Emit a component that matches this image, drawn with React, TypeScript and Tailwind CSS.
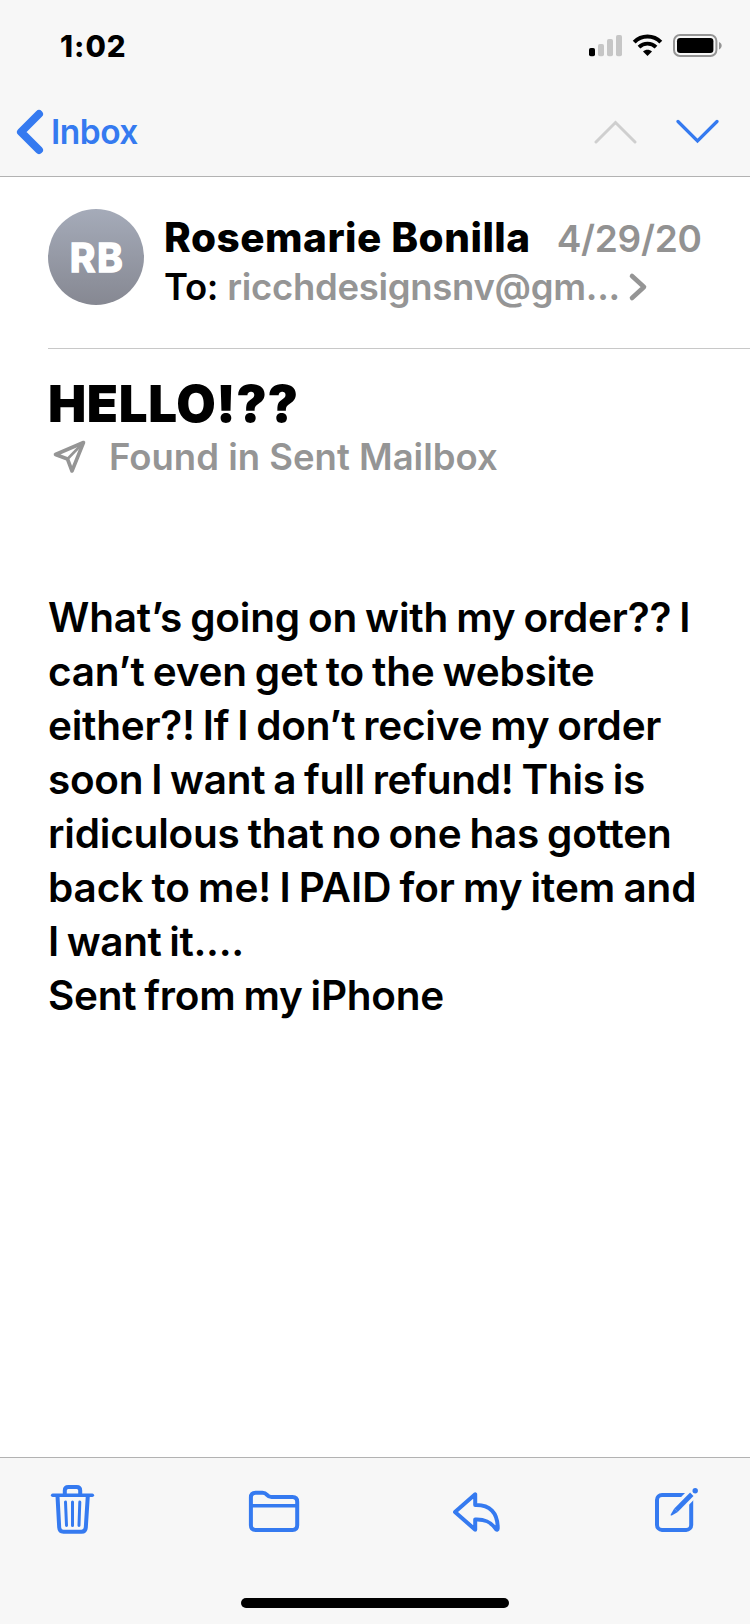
const bodyLines = [
    { text: "What’s going on with my order?? I", className: "tracking-[-0.18px]" },
    { text: "can’t even get to the website", className: "tracking-[-0.2px]" },
    { text: "either?! If I don’t recive my order", className: "tracking-[-0.24px]" },
    { text: "soon I want a full refund! This is", className: "tracking-[-0.27px]" },
    { text: "ridiculous that no one has gotten", className: "tracking-[-0.2px]" },
    { text: "back to me! I PAID for my item and", className: "tracking-[-0.06px]" },
    { text: "I want it....", className: "tracking-[-0.36px]" },
    { text: "Sent from my iPhone", className: "tracking-[-0.24px]" }
];

function StatusIcons() {
    return (
        <svg width="134" height="24" viewBox="589 34 134 24" fill="none">
            <rect x="589" y="48" width="6" height="8.2" rx="1.8" fill="#000" />
            <g fill="#c6c6c6">
                <rect x="598" y="44" width="6" height="12.2" rx="1.8" />
                <rect x="607" y="39" width="6" height="17.2" rx="1.8" />
                <rect x="616" y="35" width="6" height="21.2" rx="1.8" />
            </g>
            <path d="M634.2 42.2C641.5 34.6 653.5 34.6 660.8 42.2" stroke="#000" strokeWidth="4" />
            <path d="M639 47.2C643.8 42.4 651.2 42.4 656 47.2" stroke="#000" strokeWidth="3.8" />
            <path d="M643 51.4C645.6 49.2 649.4 49.2 652 51.4L647.5 56Z" fill="#000" />
            <rect x="674" y="35" width="42.4" height="21" rx="6" stroke="#959595" strokeWidth="2" />
            <rect x="677" y="38" width="36.4" height="15" rx="3.2" fill="#000" />
            <path d="M719 42C722.6 43.4 722.6 48 719 49.4Z" fill="#959595" />
        </svg>
    );
}

function StatusBar() {
    return (
        <div className="flex h-22 items-center justify-between pt-[3px] pr-[27px] pl-[60px]">
            <span className="text-[29.5px] leading-9 font-extrabold tracking-[1px]">1:02</span>
            <StatusIcons />
        </div>
    );
}

function NavBar() {
    return (
        <div className="flex h-22 items-center justify-between pr-[31px] pl-4">
            <button className="flex items-center text-[#357af0]">
                <svg width="28" height="46" viewBox="0 0 28 46" fill="none">
                    <path
                        d="M23 5L5 23L23 41"
                        stroke="currentColor"
                        strokeWidth="8"
                        strokeLinecap="round"
                        strokeLinejoin="round"
                    />
                </svg>
                <span className="ml-[7px] text-[33.5px] leading-10 font-[570] tracking-[-0.5px]">Inbox</span>
            </button>
            <div className="flex gap-[38px]">
                <svg width="44" height="26" viewBox="0 0 44 26" fill="none">
                    <path d="M3 23L22.5 3.5L42 23" stroke="#cfcfcf" strokeWidth="3" strokeLinecap="round" />
                </svg>
                <svg width="44" height="26" viewBox="0 0 44 26" fill="none">
                    <path d="M3 2.5L22.5 22L42 2.5" stroke="#357af0" strokeWidth="3.2" strokeLinecap="round" />
                </svg>
            </div>
        </div>
    );
}

function Toolbar() {
    return (
        <div className="flex justify-between pt-6 pr-[51px] pl-[50px] text-[#357af0]">
            <svg width="46" height="54" viewBox="50 1482 46 54" fill="none" stroke="currentColor" strokeLinecap="round" strokeLinejoin="round">
                <path d="M52.7 1495.2H92.3" strokeWidth="3.6" />
                <path d="M64.8 1495V1490.5Q64.8 1487 68.3 1487H76.7Q80.2 1487 80.2 1490.5V1495" strokeWidth="4" />
                <path d="M57.5 1496L59.2 1527.5Q59.5 1531.8 63.5 1531.8H81.5Q85.5 1531.8 85.8 1527.5L87.8 1496" strokeWidth="4" />
                <path d="M65.5 1502L66.5 1525.5M72.5 1502V1525.5M79.8 1502L79 1525.5" strokeWidth="3" />
            </svg>
            <svg width="52" height="54" viewBox="248 1482 52 54" fill="none" stroke="currentColor" strokeWidth="4" strokeLinejoin="round">
                <path d="M250.9 1497.5Q250.9 1492.8 255.6 1492.8H262.5Q265.2 1492.8 267 1494.8Q268.9 1497 271.5 1497H292.5Q297.2 1497 297.2 1501.7V1525.3Q297.2 1530 292.5 1530H255.6Q250.9 1530 250.9 1525.3Z" />
                <path d="M251 1505.7H297" strokeWidth="3.4" />
            </svg>
            <svg width="50" height="54" viewBox="451.3 1482 50 54" fill="none" stroke="currentColor" strokeWidth="4" strokeLinejoin="round">
                <path d="M475.5 1494.3V1505C490 1504.5 498.2 1512.5 498 1528.5Q497.9 1530.6 496.3 1529.2C491 1521.5 485 1519 475.5 1519.5V1529.7L455.3 1512Z" />
            </svg>
            <svg width="46" height="54" viewBox="653 1482 46 54" fill="none" stroke="currentColor">
                <rect x="657" y="1494.9" width="34.2" height="35" rx="5" strokeWidth="4" />
                {/* gap in the frame around the pencil */}
                <path d="M676 1510.2L698 1487.6" stroke="#f7f7f7" strokeWidth="11" />
                <path d="M676 1510.2L691.8 1494.2" strokeWidth="4.8" />
                <path d="M674.2 1508.6L677.8 1512L671.8 1515.5Q670.3 1515.9 670.7 1514.4Z" fill="currentColor" stroke="none" />
                <circle cx="695.2" cy="1490.8" r="2.7" fill="currentColor" stroke="none" />
            </svg>
        </div>
    );
}

export default function App() {
    return (
        <div className="flex h-[1624px] w-[750px] flex-col overflow-hidden bg-white font-['Inter',sans-serif] text-black">
            <header className="border-b border-[#b2b2b2] bg-[#f7f7f7]">
                <StatusBar />
                <NavBar />
            </header>

            <main className="flex-1 pl-12">
                <div className="flex h-[172px] border-b border-[#c8c8c8] pt-8">
                    <div className="flex size-24 shrink-0 items-center justify-center rounded-full bg-linear-to-b from-[#a5abb9] to-[#868892]">
                        <span className="pl-0.5 text-[39px] leading-none font-bold tracking-[1.6px] text-white [-webkit-text-stroke:1.6px_white] [stroke-linejoin:round]">RB</span>
                    </div>
                    <div className="mt-1 ml-5 whitespace-nowrap">
                        <div className="flex items-baseline leading-[50px]">
                            <span className="text-[40.5px] font-extrabold tracking-[0.5px]">Rosemarie Bonilla</span>
                            <span className="ml-[26px] text-[37px] font-[570] tracking-[-0.25px] text-[#929292]">4/29/20</span>
                        </div>
                        <div className="flex items-center text-[36.5px] leading-[46px] font-[570] tracking-[-0.3px]">
                            <span>To:</span>
                            <span className="ml-[9px] text-[#959595]">ricchdesignsnv@gm...</span>
                            <svg className="ml-2" width="20" height="30" viewBox="0 0 20 30" fill="none">
                                <path d="M4 4L16 15L4 26" stroke="#959595" strokeWidth="4.6" strokeLinecap="round" strokeLinejoin="round" />
                            </svg>
                        </div>
                    </div>
                </div>

                <h1 className="mt-[25px] text-[51px] leading-[60px] font-black tracking-[0.6px]">HELLO!??</h1>
                <div className="flex h-[46px] items-center pl-[5px] text-[#959595]">
                    <svg width="34" height="34" viewBox="0 0 34 34" fill="none" stroke="currentColor" strokeWidth="3.6" strokeLinejoin="round">
                        <path d="M30.5 2.5L2.5 14.5L14.5 19L19 31Z" />
                        <path d="M30.5 2.5L14.5 19" strokeWidth="2.6" />
                    </svg>
                    <span className="ml-[22px] text-[36.5px] leading-[46px] font-[570]">Found in Sent Mailbox</span>
                </div>

                <div className="mt-[111px] text-[40.5px] leading-[54px] font-semibold whitespace-nowrap [word-spacing:-2px]">
                    {bodyLines.map((line) => (
                        <p key={line.text}>
                            <span className={line.className}>{line.text}</span>
                        </p>
                    ))}
                </div>
            </main>

            <footer className="flex h-[167px] flex-col justify-between border-t border-[#b2b2b2] bg-[#f7f7f7] pb-4">
                <Toolbar />
                <div className="h-2.5 w-[268px] self-center rounded-full bg-black" />
            </footer>
        </div>
    );
}
